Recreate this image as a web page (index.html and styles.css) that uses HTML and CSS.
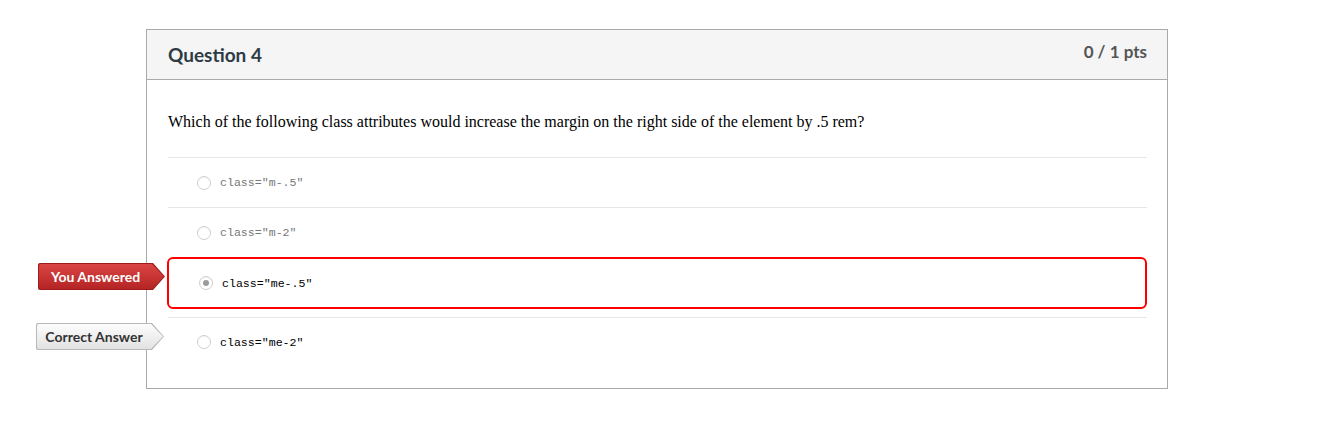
FILE: index.html
```html
<!DOCTYPE html>
<html>
<head>
<meta charset="utf-8">
<link rel="stylesheet" href="styles.css">
</head>
<body>
<div class="page">
  <div class="card">
    <div class="header">
      <h2 class="title">Question 4</h2>
      <div class="pts">0 / 1 pts</div>
    </div>
    <div class="body">
      <p class="question">Which of the following class attributes would increase the margin on the right side of the element by .5 rem?</p>
      <div class="answers">
        <div class="answer">
          <span class="radio"></span>
          <code class="code">class="m-.5"</code>
        </div>
        <div class="answer">
          <span class="radio"></span>
          <code class="code">class="m-2"</code>
        </div>
        <div class="answer selected">
          <div class="tag tag-wrong"><span class="tag-inner">You Answered</span></div>
          <span class="radio checked"></span>
          <code class="code dark">class="me-.5"</code>
        </div>
        <div class="answer correct">
          <div class="tag tag-right"><span class="tag-inner">Correct Answer</span></div>
          <span class="radio"></span>
          <code class="code dark">class="me-2"</code>
        </div>
      </div>
    </div>
  </div>
</div>
</body>
</html>
```

FILE: styles.css
```css
* { box-sizing: border-box; }
html, body { margin: 0; padding: 0; background: #fff; }
.page { padding: 29px 0 0 146px; }
.card {
  width: 1022px;
  border: 1px solid #aaaaaa;
  background: #fff;
}
.header {
  height: 50px;
  background: #f5f5f5;
  border-bottom: 1px solid #aaaaaa;
  display: flex;
  justify-content: space-between;
  padding: 0 20px 0 21px;
}
.title {
  margin: 0;
  font-family: Lato, "Noto Sans", sans-serif;
  font-weight: 700;
  font-size: 19px;
  line-height: 20px;
  color: #2d3b45;
  padding-top: 15px;
}
.pts {
  font-family: Lato, "Noto Sans", sans-serif;
  font-weight: 700;
  font-size: 17px;
  line-height: 20px;
  color: #555;
  padding-top: 12px;
}
.body { padding: 0 20px 20px 21px; }
.question {
  margin: 0;
  padding: 33px 0 26px;
  font-family: "Liberation Serif", serif;
  font-size: 16px;
  line-height: 18px;
  color: #000;
}
.answers { display: flex; flex-direction: column; }
.answer {
  position: relative;
  height: 50px;
  border-top: 1px solid #e6e6e6;
  display: flex;
  align-items: center;
  padding-left: 29px;
}
.answer.selected {
  border: 2px solid #ff0000;
  border-radius: 6px;
  height: 52px;
  margin: 0 0 8px -1px;
  padding-left: 30px;
}
.answer.correct { height: 51px; padding-bottom: 2px; }
.radio {
  width: 14px;
  height: 14px;
  border-radius: 50%;
  border: 1px solid #cfcfcf;
  background: #fff;
  margin-right: 9px;
  flex: none;
  position: relative;
  box-shadow: inset 0 1px 1px rgba(0,0,0,0.05);
}
.radio.checked::after {
  content: "";
  position: absolute;
  left: 3px; top: 3px;
  width: 6px; height: 6px;
  border-radius: 50%;
  background: #9a9a9a;
}
.code {
  font-family: "Liberation Mono", "Courier New", monospace;
  font-size: 11.6px;
  color: #777;
}
.code.dark { color: #000; }
.tag {
  position: absolute;
  right: calc(100% + 4px);
  width: 128px;
  height: 27px;
  clip-path: polygon(0 0, 116px 0, 128px 50%, 116px 100%, 0 100%);
  border-radius: 2px;
  padding: 1px;
}
.tag-wrong { top: 4px; width: 127px; background: #9e1b1b;
  clip-path: polygon(0 0, 115px 0, 127px 50%, 115px 100%, 0 100%); }
.tag-right { top: 5px; background: #b8b8b8; }
.tag-inner {
  display: flex;
  align-items: center;
  justify-content: center;
  height: 100%;
  width: 100%;
  padding-right: 12px;
  font-family: Lato, "Noto Sans", sans-serif;
  font-weight: 700;
  font-size: 14px;
  clip-path: polygon(0 0, calc(100% - 12px) 0, 100% 50%, calc(100% - 12px) 100%, 0 100%);
  border-radius: 2px;
}
.tag-wrong .tag-inner {
  color: #fff;
  background: linear-gradient(#da4545, #b52424);
}
.tag-right .tag-inner {
  color: #333;
  background: linear-gradient(#fdfdfd, #e2e2e2);
}
```
